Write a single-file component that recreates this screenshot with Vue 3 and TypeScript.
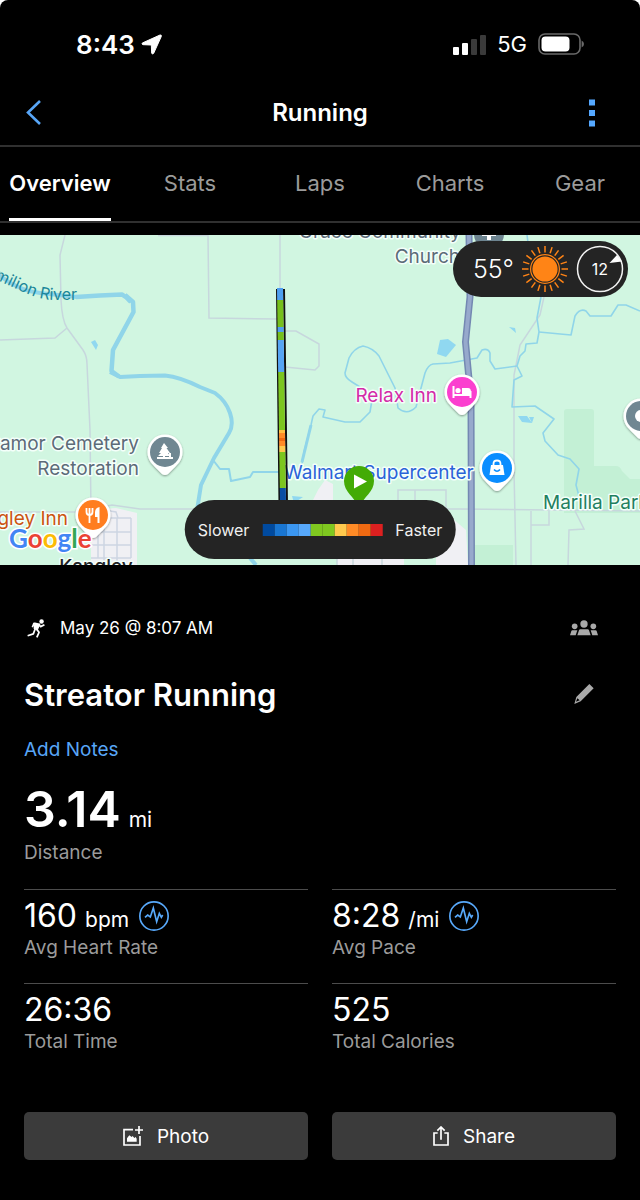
<script setup lang="ts">
import { ref } from 'vue'

interface Metric {
  value: string
  unit?: string
  label: string
  chart?: boolean
}

interface Segment {
  from: number
  to: number
  color: string
}

const tabs: string[] = ['Overview', 'Stats', 'Laps', 'Charts', 'Gear']
const activeTab = ref('Overview')

const metrics: Metric[] = [
  { value: '160', unit: 'bpm', label: 'Avg Heart Rate', chart: true },
  { value: '8:28', unit: '/mi', label: 'Avg Pace', chart: true },
  { value: '26:36', label: 'Total Time' },
  { value: '525', label: 'Total Calories' },
]

const paceColors: string[] = [
  '#004a9f', '#1976d2', '#3b97f2', '#58a9fb', '#7fc820',
  '#7fc820', '#ffc94d', '#ff8b26', '#f06a12', '#dc2020',
]

const route: Segment[] = [
  { from: 288, to: 300, color: '#4f9ff0' },
  { from: 300, to: 327, color: '#76bf1c' },
  { from: 327, to: 332, color: '#4f9ff0' },
  { from: 332, to: 340, color: '#76bf1c' },
  { from: 340, to: 372, color: '#56a4f4' },
  { from: 372, to: 430, color: '#7cc61f' },
  { from: 430, to: 433, color: '#ffbf40' },
  { from: 433, to: 438, color: '#ff8b26' },
  { from: 438, to: 441, color: '#f06a12' },
  { from: 441, to: 446, color: '#ff8b26' },
  { from: 446, to: 452, color: '#ffc94d' },
  { from: 452, to: 488, color: '#7cc61f' },
  { from: 488, to: 506, color: '#0a4fa3' },
]

// The track drifts slightly east as it runs south.
const routeX = (y: number): number => 280 + (y - 288) * 0.014

const sunRays: number[] = Array.from({ length: 20 }, (_, i) => i * 18)

const googleLetters: { char: string; color: string }[] = [
  { char: 'G', color: '#4285f4' },
  { char: 'o', color: '#ea4335' },
  { char: 'o', color: '#fbbc04' },
  { char: 'g', color: '#4285f4' },
  { char: 'l', color: '#34a853' },
  { char: 'e', color: '#ea4335' },
]
</script>

<template>
  <div class="screen">
    <div class="status">
      <div class="status-side">
        <span class="clock">8:43</span>
        <svg class="location" viewBox="0 0 63 63" aria-hidden="true">
          <path d="M4 27 57 3q5-1 4 4L38 58q-4 5-6-1L31 33 6 32q-5-2-2-5Z" fill="#fff" stroke="#fff" stroke-width="3" />
        </svg>
      </div>
      <div class="status-side">
        <svg class="signal" viewBox="0 0 33 21" aria-hidden="true">
          <rect x="0" y="13" width="6" height="8" rx="1" fill="#fff" />
          <rect x="9" y="9" width="6" height="12" rx="1" fill="#fff" />
          <rect x="18" y="5" width="6" height="16" rx="1" fill="#3a3a3a" />
          <rect x="27" y="1" width="6" height="20" rx="1" fill="#3a3a3a" />
        </svg>
        <span class="network">5G</span>
        <svg class="battery" viewBox="0 0 46 22" aria-hidden="true">
          <rect x="1" y="1" width="41" height="20" rx="6" fill="none" stroke="#6a6a6a" stroke-width="1.6" />
          <rect x="3.5" y="3.5" width="28" height="15" rx="4" fill="#fff" />
          <path d="M43.6 7.5q2.4 1 2.4 3.5t-2.4 3.5Z" fill="#6a6a6a" />
        </svg>
      </div>
    </div>

    <header class="nav">
      <button class="nav-btn" type="button" aria-label="Back">
        <svg width="16" height="26" viewBox="0 0 16 26" aria-hidden="true">
          <path d="M14 1 2 12.500 14 24" fill="none" stroke="#58a6f7" stroke-width="2.600" />
        </svg>
      </button>
      <h1>Running</h1>
      <button class="nav-btn more" type="button" aria-label="More options">
        <svg width="6" height="28" viewBox="0 0 6 28" aria-hidden="true">
          <path d="M0 .5h6v6H0zM0 11h6v6H0zM0 21.500h6v6H0z" fill="#55a8ff" />
        </svg>
      </button>
    </header>

    <nav class="tabs">
      <button
        v-for="tab in tabs"
        :key="tab"
        type="button"
        class="tab"
        :class="{ active: tab === activeTab }"
        @click="activeTab = tab"
      >
        <span>{{ tab }}</span>
      </button>
    </nav>

    <section class="map">
      <svg class="map-art" viewBox="0 235 640 330" preserveAspectRatio="xMidYMid slice">
        <defs>
          <filter id="pin-shadow" x="-30%" y="-30%" width="160%" height="160%">
            <feDropShadow dx="0" dy="1" stdDeviation="1.200" flood-color="#000" flood-opacity="0.4" />
          </filter>
          <path id="river-label" d="M-50 258C-16 273 8 286 28 294Q42 300 54 300L77 300" />
          <path id="pin" d="M0-17.500A17.500 17.500 0 0 1 17.500 0C17.500 8 13 12 8 17L3 22Q0 24 -3 22L-8 17C-13 12-17.500 8-17.500 0A17.500 17.500 0 0 1 0-17.500Z" />
        </defs>
        <rect x="0" y="235" width="640" height="330" fill="#d1f6e1" />

        <g fill="#c3f0d5">
          <path d="M567 409H591q3 0 3 3V466H616q4 0 6 5l8 8H640V513H564V412q0-3 3-3Z" />
          <path d="M474 545H513V565H474Z" />
        </g>
        <g fill="#f0f0f4">
          <path d="M91 510 116 508 137 513V565H91Z" />
          <path d="M325 480 333 484V504H311L318 490Z" />
          <path d="M452 518 466 530 468 565H436V550Z" />
          <path d="M337 558H404V565H337Z" />
        </g>

        <g fill="none" stroke="#c7d7dd" stroke-width="1.500">
          <path d="M65 235 60 255 61 300Q62 320 67 328L83 350Q87 356 87 364L90 430 91 512" />
          <path d="M0 340 55 338 67 328" />
          <path d="M158 235.500H208L209 318 278 319" />
          <path d="M280 235V290" />
          <path d="M285 331H296L319 344V366L315 370 285 367" />
          <path d="M0 512H78L112 505 140 509H460L640 511" />
          <path d="M398 509V490H446V509M415 490V509" />
          <path d="M544 297 540 315 520 345 514 375V430L514 470 516 565" />
          <path d="M549 511V525H531M531 511V565M575 511 584 529 569 530 568 565" />
          <path d="M337 558V565M353 558V565M382 558V565" />
        </g>
        <g fill="none" stroke="#cdd5e2" stroke-width="1.500">
          <path d="M98 511V558M104 511V565M117 518V565M131 518V558M110 518H131M91 532H131M91 545H131M91 558H131M110 511 116 512 118 518" />
        </g>

        <g fill="none" stroke="#90d5e9" stroke-linejoin="round">
          <path d="M-5 272Q18 291 40 293L77 297" stroke-width="4" />
          <path d="M76 297 100 295.500 122 294.500Q127 297 131 302" stroke-width="4.500" />
          <path d="M125 295 133 302 133.500 312 113 350 111.500 371 119 376.500" stroke-width="4.500" />
          <path d="M110 372 120 377 140 376 165 375.500Q180 377 200 387L215 393Q226 401 230 413 234 425 229 433L214 458 201 485 197 510" stroke-width="4" />
          <path d="M213 460 220 469H229L231 481 250 477 253 472 280 472" stroke-width="2" />
          <path d="M301 470 304 452 311 425 313 416 319 409 325 410 323 417 345 422 360 422 370 412 372 400" stroke-width="1.600" />
          <path d="M360 387 352 382Q345 378 345 373L349 358Q354 348 363 346 373 348 379 356L395 388 398 408Q407 416 416 407L425 373Q428 365 433 364L450 363 477 358 482 350Q488 348 490 353V361L495 369 517 366" stroke-width="1.600" />
          <path d="M527 235 529 250M541 297 537 318 539 332 537 343 526 344 525 351 520 356 517 366 522 376 514 380 512 407 535 406 554 419 543 433 545 441 558 455 570 459 579 469 576 485 580 500" stroke-width="1.600" />
          <path d="M539 332 571 335 575 316Q580 308 586 311L590 316H611L618 305H626L640 311" stroke-width="1.600" />
          <path d="M250 558 256 565" stroke-width="4" />
          <path d="M302 462 311 425" stroke-width="3" />
        </g>
        <g fill="#90d8f0">
          <path d="M437 354 440 340 448 339 456 345 446 357Z" />
          <path d="M518 416 527 416 532 423 522 422ZM529 417 534 417 532 423Z" />
          <path d="M91 342 95 340 98 345 96 350Z" />
          <path d="M509 327 515 328 516 333ZM292 496 303 497 294 503Z" />
        </g>

        <path d="M469 235 470 297 465.500 342 471 400 471.500 565" fill="none" stroke="#7488b2" stroke-width="7" />
        <path d="M469 235 470 297 465.500 342 471 400 471.500 565" fill="none" stroke="#97a9cc" stroke-width="4" />

        <g transform="translate(489 234)">
          <circle r="15" fill="#6d8490" />
          <path d="M-2-8H2V-2H7V2H2V6H-2V2H-7V-2H-2Z" fill="#fff" />
        </g>

        <g class="label grey">
          <text x="461" y="238" text-anchor="end">Grace Community</text>
          <text x="460" y="263" text-anchor="end">Church</text>
          <text x="139" y="450" text-anchor="end">Miramor Cemetery</text>
          <text x="139" y="475" text-anchor="end">Restoration</text>
        </g>
        <text class="river"><textPath href="#river-label" startOffset="100%" text-anchor="end">Vermilion River</textPath></text>
        <text class="label" x="437" y="402" text-anchor="end" fill="#d42ba8">Relax Inn</text>
        <text class="label" x="284" y="479" fill="#2a63d8">Walmart Supercenter</text>
        <text class="label" x="543" y="509" fill="#1f8060">Marilla Park</text>
        <text class="label" x="68" y="525" text-anchor="end" fill="#cc5410">Kangley Inn</text>
        <text class="label town" x="96" y="573" text-anchor="middle">Kangley</text>

        <g transform="translate(165 452)">
          <use href="#pin" fill="#fff" filter="url(#pin-shadow)" />
          <circle r="15" fill="#708792" />
          <path d="M-1-9 3-4H1.500L5 1H3L5 4H0V5H4V1H6V5H8V7H-8V5H-2V4H-7L-4 1H-6L-3-4H-4Z" fill="#fff" />
        </g>
        <g transform="translate(93 515)">
          <use href="#pin" fill="#fff" filter="url(#pin-shadow)" />
          <circle r="15" fill="#ff7d20" />
          <path d="M-6.500-7V-3Q-6.500 0-3.500 0T-.5-3V-7M-3.500-7V8" fill="none" stroke="#fff" stroke-width="1.800" />
          <path d="M6.500-8V8H4.500V2H2V-3Q2-7 6.500-8Z" fill="#fff" />
        </g>
        <g transform="translate(462 392)">
          <use href="#pin" fill="#fff" filter="url(#pin-shadow)" />
          <circle r="15" fill="#fb3fcf" />
          <path d="M-8.500-6V6M-8.500 3H8.500M8.500 6V-1" fill="none" stroke="#fff" stroke-width="2" />
          <path d="M0 2V-4H6Q9-4 9 0V2Z" fill="#fff" />
          <circle cx="-4" cy="-1.500" r="2.600" fill="#fff" />
        </g>
        <g transform="translate(497 468)">
          <use href="#pin" fill="#fff" filter="url(#pin-shadow)" />
          <circle r="15" fill="#0a8dff" />
          <path d="M-3.500-2V-4Q-3.500-7.500 0-7.500T3.500-4V-2" fill="none" stroke="#fff" stroke-width="1.800" />
          <path d="M-6-3H6L7.500 7H-7.500Z" fill="#fff" />
          <path d="M-3 1.500Q0 5 3 1.500" fill="none" stroke="#0a8dff" stroke-width="1.600" />
        </g>
        <g transform="translate(641 416)">
          <use href="#pin" fill="#fff" filter="url(#pin-shadow)" />
          <circle r="15" fill="#708792" />
          <circle r="6" fill="#fff" />
        </g>

        <g>
          <path d="M277 289 279.500 505M284 289 287 505" fill="none" stroke="#111" stroke-width="2" />
          <line
            v-for="seg in route"
            :key="seg.from"
            :x1="routeX(seg.from)"
            :y1="seg.from"
            :x2="routeX(seg.to)"
            :y2="seg.to"
            :stroke="seg.color"
            stroke-width="6"
          />
        </g>
        <path d="M359 466A15 15 0 0 1 374 481C374 492 364 496 359 508 354 496 344 492 344 481A15 15 0 0 1 359 466Z" fill="#43ab05" />
        <path d="M354 474.500 367 481.500 354 488.500Z" fill="#fff" />

        <text class="google" x="9" y="548">
          <tspan v-for="(letter, i) in googleLetters" :key="i" :fill="letter.color">{{ letter.char }}</tspan>
        </text>
      </svg>

      <div class="weather">
        <span class="temp">55°</span>
        <svg class="sun" viewBox="-23 -23 46 46" aria-hidden="true">
          <circle r="12.600" fill="#ff8416" />
          <circle r="14.400" fill="none" stroke="#ff8416" stroke-width="1.200" />
          <g stroke="#ff8416" stroke-width="1.500">
            <line v-for="angle in sunRays" :key="angle" x1="0" y1="-16.500" x2="0" y2="-23" :transform="`rotate(${angle})`" />
          </g>
        </svg>
        <div class="wind">
          <svg viewBox="-24 -24 48 48" aria-hidden="true">
            <circle r="22.500" fill="none" stroke="#f2f2f2" stroke-width="1.500" />
            <path d="M9.500-6 17-14 22-7.500Z" fill="#fff" />
          </svg>
          <span>12</span>
        </div>
      </div>

      <div class="legend">
        <span>Slower</span>
        <div class="scale">
          <i v-for="(color, i) in paceColors" :key="i" :style="{ background: color }"></i>
        </div>
        <span>Faster</span>
      </div>
    </section>

    <main class="details">
      <div class="row date-row">
        <div class="date">
          <svg class="runner" viewBox="0 0 60 60" aria-hidden="true">
            <circle cx="46" cy="8" r="7" fill="#fff" />
            <path d="M25 14 40 16 33 33 23 30Z" fill="#fff" stroke="#fff" stroke-width="4" stroke-linejoin="round" />
            <path d="M17 26 22 14 33 15M37 17 43 24 55 18M30 32 38 42 31 58M26 31 20 47 2 53" fill="none" stroke="#fff" stroke-width="5.500" stroke-linejoin="round" />
          </svg>
          <span>May 26 @ 8:07 AM</span>
        </div>
        <button class="icon-btn" type="button" aria-label="Privacy">
          <svg width="28" height="16" viewBox="0 0 84 48" aria-hidden="true">
            <g fill="#a9a9a9">
              <circle cx="42" cy="12" r="11" />
              <circle cx="14" cy="19" r="8.500" />
              <circle cx="70" cy="19" r="8.500" />
              <path d="M31 28H53Q56 28 57 31L62 46H22L27 31Q28 28 31 28ZM7 31H22L17 46H0L4 33Q5 31 7 31ZM62 31H77Q79 31 80 33L84 46H67Z" />
            </g>
          </svg>
        </button>
      </div>

      <div class="row title-row">
        <h2>Streator Running</h2>
        <button class="icon-btn" type="button" aria-label="Edit name">
          <svg width="20" height="20" viewBox="0 0 60 60" aria-hidden="true">
            <path d="M46 0 59 13 20 52 1 60 7 39ZM10 43 6 53 17 49Z" fill="#a9a9a9" fill-rule="evenodd" />
          </svg>
        </button>
      </div>

      <a class="notes" href="#notes">Add Notes</a>

      <div class="distance">
        <p class="value"><strong>3.14</strong><span class="unit">mi</span></p>
        <p class="caption">Distance</p>
      </div>

      <div class="metrics">
        <div v-for="metric in metrics" :key="metric.label" class="metric">
          <p class="value">
            <span>{{ metric.value }}</span>
            <span v-if="metric.unit" class="unit">{{ metric.unit }}</span>
            <svg v-if="metric.chart" class="pulse" viewBox="0 0 90 90" aria-hidden="true">
              <circle cx="45" cy="45" r="42.500" fill="none" stroke="#58a9fb" stroke-width="5" />
              <path d="M18 49 26 42 34 48 43 21 53 62 61 37 67 49 71 42" fill="none" stroke="#58a9fb" stroke-width="5" />
            </svg>
          </p>
          <p class="caption">{{ metric.label }}</p>
        </div>
      </div>

      <div class="actions">
        <button type="button">
          <svg width="20" height="20" viewBox="0 0 60 60" aria-hidden="true">
            <path d="M30 11H3V57H51V30M48 0V24M36 12H60" fill="none" stroke="#fff" stroke-width="5" />
            <path d="M12 47V37L19 28 26 33 29 30 34 36 38 33 41 38V47Z" fill="#fff" />
          </svg>
          <span>Photo</span>
        </button>
        <button type="button">
          <svg width="16" height="20" viewBox="0 0 48 60" aria-hidden="true">
            <path d="M14 21H3V57H45V21H34M24 41V5M13 14 24 3 35 14" fill="none" stroke="#fff" stroke-width="5" />
          </svg>
          <span>Share</span>
        </button>
      </div>
    </main>
  </div>
</template>

<style>
body {
  margin: 0;
  background: #fff;
}
</style>

<style scoped>
.screen {
  min-height: 100vh;
  box-sizing: border-box;
  background: #000;
  border-radius: 8px 8px 0 0;
  overflow: hidden;
  color: #fff;
  font-family: Inter, "Liberation Sans", sans-serif;
}

button {
  padding: 0;
  border: 0;
  background: none;
  color: inherit;
  font: inherit;
  cursor: pointer;
}

h1,
h2,
p {
  margin: 0;
}

svg {
  display: block;
  flex: none;
}

.status {
  display: flex;
  align-items: center;
  justify-content: space-between;
  height: 80px;
  padding: 8px 56px 0 76px;
  box-sizing: border-box;
}

.status-side {
  display: flex;
  align-items: center;
}

.clock {
  font-size: 26px;
  font-weight: 600;
}

.location {
  width: 21px;
  height: 21px;
  margin-left: 6px;
}

.signal {
  width: 33px;
  height: 21px;
}

.network {
  margin: 0 11px;
  font-size: 22px;
}

.battery {
  width: 46px;
  height: 22px;
}

.nav {
  display: grid;
  grid-template-columns: 1fr auto 1fr;
  align-items: center;
  height: 67px;
  box-sizing: border-box;
  padding: 0 12px;
  border-bottom: 2px solid #303030;
}

.nav-btn {
  display: flex;
  align-items: center;
  justify-content: center;
  width: 44px;
  height: 44px;
}

.more {
  justify-self: end;
  width: 72px;
}

.nav h1 {
  font-size: 24px;
  font-weight: 600;
}

.tabs {
  display: flex;
  height: 76px;
  box-sizing: border-box;
  margin: 0 -5px 12px;
  border-bottom: 2px solid #303030;
}

.tab {
  display: flex;
  flex: 1;
  justify-content: center;
  color: #9b9b9b;
  font-size: 22px;
}

.tab span {
  display: flex;
  align-items: center;
  height: 74px;
  box-sizing: border-box;
  border-bottom: 3px solid transparent;
}

.tab.active {
  color: #fff;
  font-weight: 600;
}

.tab.active span {
  border-color: #fff;
}

.map {
  position: relative;
  height: 330px;
}

.map-art {
  width: 100%;
  height: 100%;
}

.label {
  font-size: 19px;
  stroke: #f4fffa;
  stroke-width: 3px;
  stroke-linejoin: round;
  paint-order: stroke;
}

.grey {
  fill: #5c6b78;
}

.river {
  font-size: 16px;
  fill: #1b8699;
}

.town {
  fill: #202124;
  font-weight: 500;
}

.google {
  font-family: Lato, sans-serif;
  font-size: 26px;
  font-weight: 700;
  stroke: #fff;
  stroke-width: 3px;
  paint-order: stroke;
}

.weather {
  position: absolute;
  top: 6px;
  right: 12px;
  display: flex;
  align-items: center;
  height: 56px;
  padding: 0 4px 0 20px;
  border-radius: 28px;
  background: #242424;
}

.temp {
  font-size: 25px;
  font-weight: 300;
}

.sun {
  width: 46px;
  height: 46px;
  margin: 0 8px;
}

.wind {
  display: grid;
  place-items: center;
  width: 48px;
  height: 48px;
  font-size: 16px;
}

.wind svg,
.wind span {
  grid-area: 1 / 1;
}

.wind svg {
  width: 48px;
  height: 48px;
}

.legend {
  position: absolute;
  bottom: 6px;
  left: 50%;
  transform: translateX(-50%);
  display: flex;
  align-items: center;
  gap: 13px;
  height: 59px;
  padding: 0 13px;
  border-radius: 30px;
  background: #242424;
  color: #f0f0f0;
  font-size: 16px;
}

.scale {
  display: flex;
}

.scale i {
  width: 12px;
  height: 12px;
}

.details {
  padding: 40px 24px 41px;
}

.row {
  display: flex;
  align-items: center;
  justify-content: space-between;
}

.date-row {
  height: 46px;
}

.date {
  display: flex;
  align-items: center;
  gap: 14px;
  padding-left: 3px;
  font-size: 17px;
}

.runner {
  width: 19px;
  height: 19px;
}

.icon-btn {
  display: flex;
  align-items: center;
  justify-content: center;
  width: 48px;
  height: 44px;
  margin-right: 8px;
}

.title-row {
  height: 86px;
}

.title-row h2 {
  font-size: 31px;
  font-weight: 600;
}

.notes {
  display: block;
  width: max-content;
  color: #58a6f7;
  font-size: 19px;
  line-height: 26px;
  text-decoration: none;
}

.value {
  display: flex;
  align-items: baseline;
  font-size: 32px;
}

.unit {
  margin-left: 8px;
  font-size: 21px;
}

.caption {
  color: #9b9b9b;
  font-size: 19px;
  line-height: 24px;
}

.distance {
  padding-top: 14px;
}

.distance .value {
  height: 64px;
  line-height: 64px;
}

.distance strong {
  font-size: 50px;
  font-weight: 600;
}

.metrics {
  display: grid;
  grid-template-columns: 1fr 1fr;
  column-gap: 24px;
  margin-top: 24px;
}

.metric {
  height: 94px;
  box-sizing: border-box;
  padding-top: 6px;
  border-top: 1px solid #4c4c4c;
}

.metric .value {
  height: 40px;
  line-height: 40px;
}

.pulse {
  align-self: center;
  width: 30px;
  height: 30px;
  margin-left: 10px;
}

.actions {
  display: grid;
  grid-template-columns: 1fr 1fr;
  gap: 24px;
  margin-top: 35px;
}

.actions button {
  display: flex;
  align-items: center;
  justify-content: center;
  gap: 14px;
  height: 48px;
  border-radius: 5px;
  background: #3b3b3b;
  font-size: 19px;
}
</style>
